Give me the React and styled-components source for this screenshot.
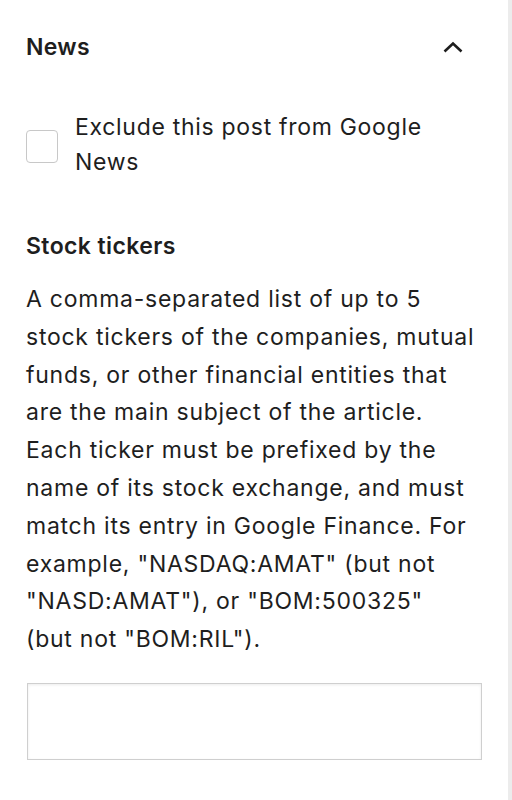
import React from 'react';
import styled, { createGlobalStyle } from 'styled-components';

const Global = createGlobalStyle`
  body {
    margin: 0;
    background: #fff;
    font-family: Inter, "Noto Sans", sans-serif;
    color: #1e1e1e;
  }
`;

const Panel = styled.div`
  width: 512px;
  height: 800px;
  box-sizing: border-box;
  border-right: 4px solid #ececec;
  padding: 0 26px;
`;

const Header = styled.div`
  display: flex;
  align-items: center;
  justify-content: space-between;
  height: 94px;
  padding-right: 19px;
`;

const Title = styled.h2`
  margin: 0;
  font-size: 23px;
  font-weight: 600;
  letter-spacing: 0.3px;
`;

const CheckRow = styled.label`
  display: flex;
  align-items: center;
  gap: 17px;
  margin-top: 16px;
`;

const Box = styled.span`
  flex: none;
  width: 30px;
  height: 31px;
  margin-top: 3px;
  border: 1px solid #c8c8c8;
  border-radius: 4px;
  background: #fff;
`;

const CheckText = styled.span`
  font-size: 23px;
  line-height: 35px;
  letter-spacing: 0.7px;
  width: 370px;
`;

const SubTitle = styled.h3`
  margin: 52px 0 0;
  font-size: 23px;
  font-weight: 600;
  line-height: 28px;
  letter-spacing: 0.4px;
`;

const Help = styled.p`
  margin: 21px 0 0;
  font-size: 23px;
  line-height: 37.8px;
  letter-spacing: 0.75px;
  width: 458px;
`;

const Input = styled.div`
  margin-top: 24px;
  margin-left: 1px;
  width: 455px;
  height: 77px;
  box-sizing: border-box;
  border: 1px solid #cfcfcf;
  box-shadow: inset 0 1px 3px rgba(0, 0, 0, 0.08);
`;

// "(but not" kept together so the last line wraps like the original
const helpText =
  'A comma-separated list of up to 5 stock tickers of the companies, mutual funds, or other ' +
  'financial entities that are the main subject of the article. Each ticker must be prefixed ' +
  'by the name of its stock exchange, and must match its entry in Google Finance. For ' +
  'example, "NASDAQ:AMAT" (but not "NASD:AMAT"), or "BOM:500325" (but\u00a0not "BOM:RIL").';

export default function App() {
  return (
    <>
      <Global />
      <Panel>
        <Header>
          <Title>News</Title>
          <svg width="20" height="12" viewBox="0 0 20 12" fill="none">
            <path d="M1.5 10.5 L10 2.5 L18.5 10.5" stroke="#1e1e1e" strokeWidth="2.6" />
          </svg>
        </Header>
        <CheckRow>
          <Box />
          <CheckText>Exclude this post from Google News</CheckText>
        </CheckRow>
        <SubTitle>Stock tickers</SubTitle>
        <Help>{helpText}</Help>
        <Input />
      </Panel>
    </>
  );
}
